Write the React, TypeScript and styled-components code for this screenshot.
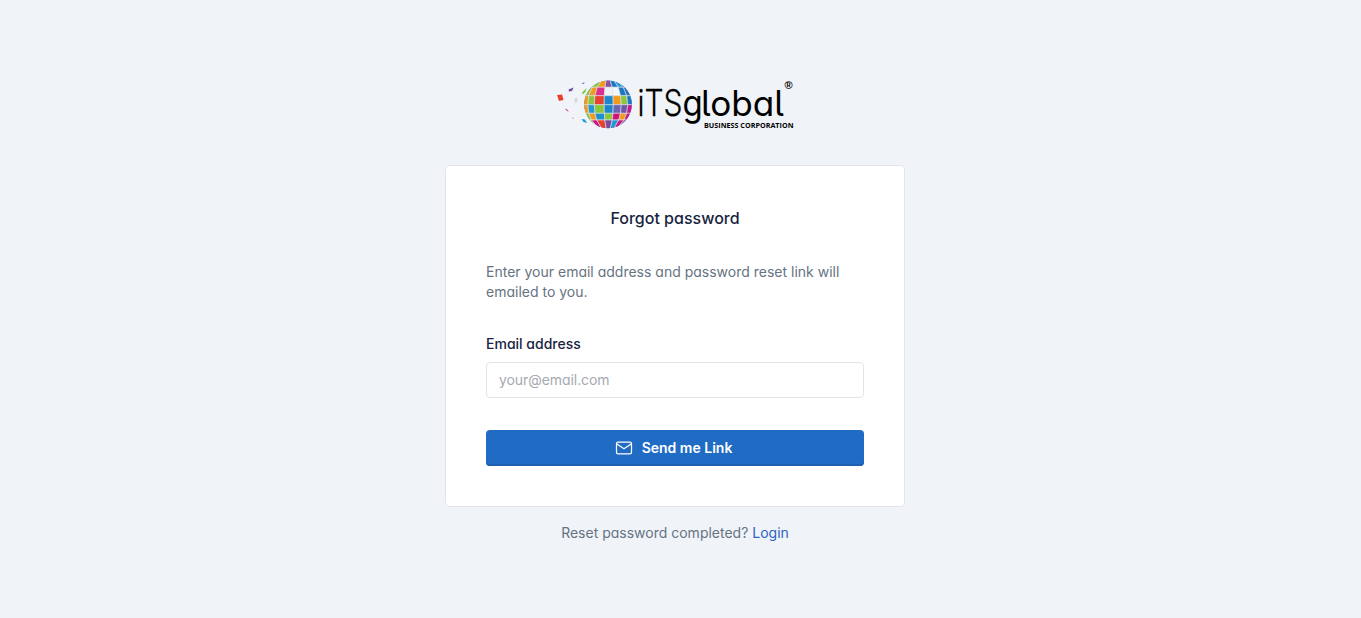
import React from "react";
import styled, { createGlobalStyle } from "styled-components";

const GlobalStyle = createGlobalStyle`
  *, *::before, *::after { box-sizing: border-box; }
  body {
    margin: 0;
    background: #f0f4f9;
    color: #182440;
    font-family: Inter, "Liberation Sans", sans-serif;
    font-feature-settings: "cv03", "cv04", "cv11";
    font-size: 14px;
    line-height: 20px;
  }
`;

const Page = styled.main`
  min-height: 618px;
  padding: 78px 11px 0 0;
  display: flex;
  flex-direction: column;
  align-items: center;
`;

const Brand = styled.a`
  display: block;
  height: 55px;
  margin-bottom: 32px;
`;

const LogoSvg = styled.svg`
  display: block;
  overflow: visible;
`;

const Wordmark = styled.text`
  font-feature-settings: "cv11", "cv05";
`;

const Card = styled.form`
  width: 460px;
  padding: 40px;
  background: #fff;
  border: 1px solid #e1e5ea;
  border-radius: 4px;
`;

const Title = styled.h2`
  margin: 0 0 32px;
  font-size: 16px;
  line-height: 24px;
  font-weight: 500;
  text-align: center;
`;

const Hint = styled.p`
  margin: 0 0 32px;
  color: #667382;
`;

const Label = styled.label`
  display: block;
  margin-bottom: 8px;
  font-weight: 500;
`;

const Input = styled.input`
  display: block;
  width: 100%;
  height: 36px;
  padding: 0 12px 2px;
  border: 1px solid #e1e5ea;
  border-radius: 4px;
  background: #fff;
  font: inherit;
  font-feature-settings: inherit;
  letter-spacing: -0.07px;
  &::placeholder { color: #a5a9b1; opacity: 1; }
`;

const Button = styled.button`
  display: flex;
  align-items: center;
  justify-content: center;
  gap: 8px;
  width: 100%;
  height: 36px;
  margin-top: 32px;
  padding: 0 4px 0 0;
  border: 0;
  border-radius: 4px;
  background: #206bc4;
  box-shadow: inset 0 -2px 0 #1d60b0;
  color: #fff;
  font: inherit;
  font-feature-settings: inherit;
  font-weight: 600;
`;

const Footer = styled.div`
  margin-top: 16px;
  color: #667382;
`;

const Link = styled.a`
  color: #2c63c2;
  text-decoration: none;
`;

const rows: string[][] = [
  ["#8cc63f", "#8cc63f", "#f39a1e", "#8b4fa0", "#1b78c2", "#2a9bd6", "#1b62ac"],
  ["#8cc63f", "#f39a1e", "#d9308c", "#eef3f6", "#f4f6f8", "#1b78c2", "#2a6fb8"],
  ["#f39a1e", "#8cc63f", "#e8402c", "#1b86cc", "#f39a1e", "#8cc63f", "#1b78c2"],
  ["#f39a1e", "#1e9ad8", "#8cc63f", "#1b86cc", "#6d64b0", "#6d56a8", "#c4178a"],
  ["#8cc63f", "#f39a1e", "#1e8fd0", "#8cc63f", "#d0127f", "#f39a1e", "#c4178a"],
  ["#8cc63f", "#d0127f", "#e8402c", "#7a4b9c", "#1e9ad8", "#d0127f", "#7a4b9c"],
];

const seamsX = [-26, -20, -13.5, -3.6, 5.5, 13.5, 20, 26];
const seamsY = [2, 9.3, 17.7, 26.7, 35.3, 42, 50.5];

const point = (r: number, c: number) => {
  const v = (seamsY[r] - 26.3) / 24.3;
  const squeeze = Math.sqrt(Math.max(0.12, 1 - v * v * 0.8));
  return `${(50.8 + seamsX[c] * squeeze).toFixed(2)},${seamsY[r]}`;
};

const Logo = () => (
  <LogoSvg width="236" height="55" viewBox="0 0 236 55" role="img">
    <clipPath id="globe">
      <circle cx="51" cy="26.4" r="23.8" />
    </clipPath>
    <circle cx="51" cy="26.4" r="23.8" fill="#4a72b6" />
    <g stroke="#e6ebf0" strokeWidth="0.6" clipPath="url(#globe)">
      {rows.map((row, r) =>
        row.map((fill, c) => (
          <polygon
            key={`${r}-${c}`}
            fill={fill}
            points={[point(r, c), point(r, c + 1), point(r + 1, c + 1), point(r + 1, c)].join(" ")}
          />
        ))
      )}
    </g>
    <path fill="#e8402c" d="M0 17l5-.5 1.500 5.500-4.500 1z" />
    <path fill="#6a4fa0" d="M11.500 11.500l5-2-1.500 3.500-3 .5z" />
    <path fill="#cfd6d6" d="M17.500 20.500l2.500-1 .5 4.500-2.500 1z" />
    <path fill="#8cc63f" d="M25 14.500l4.500-4.500-1 4-3 2.500z" />
    <path fill="#4a72b6" d="M24.500 5.500l3.500-1.500-1.500 2z" />
    <path fill="#1e9ad8" d="M24.500 41l3.500.5 2 3.500-3.500-1z" />
    <path fill="#d9308c" d="M8 30.500l1.500.5 2.500 2.500-2-.5z" />
    <path fill="#d9308c" d="M14.500 39.500l2 .5.500 1z" />
    <Wordmark x="80.500" y="37.600" fontSize="37" fontWeight="300" stroke="#000" strokeWidth="0.3" textLength="45" lengthAdjust="spacingAndGlyphs">iTS</Wordmark>
    <Wordmark transform="translate(125.500 37.600) scale(0.97 1.06)" x="0" y="0.600" fontSize="34" fontWeight="400">g</Wordmark>
    <Wordmark x="144" y="37.600" fontSize="35" fontWeight="400" textLength="83" lengthAdjust="spacingAndGlyphs">lobal</Wordmark>
    <text x="227.600" y="10.800" fontSize="11" fontFamily="Liberation Sans" fontWeight="700">®</text>
    <text x="147" y="49.500" fontSize="7.500" fontWeight="700" fontFamily="Open Sans" textLength="89.500" lengthAdjust="spacingAndGlyphs">BUSINESS CORPORATION</text>
  </LogoSvg>
);

const MailIcon = () => (
  <svg width="20" height="20" viewBox="0 0 24 24" fill="none" stroke="currentColor" strokeWidth="1.5" strokeLinecap="round" strokeLinejoin="round">
    <path d="M3 7a2 2 0 0 1 2-2h14a2 2 0 0 1 2 2v10a2 2 0 0 1-2 2H5a2 2 0 0 1-2-2z" />
    <path d="M3 7l9 6l9-6" />
  </svg>
);

export default function App() {
  return (
    <>
      <GlobalStyle />
      <Page>
        <Brand><Logo /></Brand>
        <Card>
          <Title>Forgot password</Title>
          <Hint>Enter your email address and password reset link will emailed to you.</Hint>
          <Label htmlFor="email">Email address</Label>
          <Input id="email" type="email" placeholder="your@email.com" />
          <Button type="button"><MailIcon />Send me Link</Button>
        </Card>
        <Footer>Reset password completed? <Link>Login</Link></Footer>
      </Page>
    </>
  );
}
